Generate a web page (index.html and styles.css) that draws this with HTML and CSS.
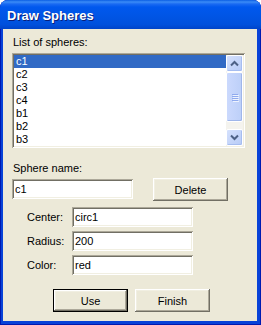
FILE: index.html
```html
<!DOCTYPE html>
<html>
<head>
<meta charset="utf-8">
<link rel="stylesheet" href="styles.css">
</head>
<body>
<div class="window">
  <div class="titlebar"><span class="title">Draw Spheres</span></div>
  <div class="client">
    <div class="label list-label">List of spheres:</div>
    <div class="listbox">
      <ul class="items">
        <li class="item selected">c1</li>
        <li class="item">c2</li>
        <li class="item">c3</li>
        <li class="item">c4</li>
        <li class="item">b1</li>
        <li class="item">b2</li>
        <li class="item">b3</li>
      </ul>
      <div class="scrollbar">
        <div class="sb-btn">
          <svg width="15" height="15" viewBox="0 0 15 15"><path d="M4 9.5 L7.5 6 L11 9.5" fill="none" stroke="#4d6185" stroke-width="2"/></svg>
        </div>
        <div class="sb-thumb">
          <div class="grip"><span></span><span></span><span></span><span></span></div>
        </div>
        <div class="sb-track"></div>
        <div class="sb-btn">
          <svg width="15" height="15" viewBox="0 0 15 15"><path d="M4 5.5 L7.5 9 L11 5.5" fill="none" stroke="#4d6185" stroke-width="2"/></svg>
        </div>
      </div>
    </div>
    <div class="label name-label">Sphere name:</div>
    <div class="name-row">
      <div class="textbox name-box">c1</div>
      <button class="btn">Delete</button>
    </div>
    <div class="fields">
      <div class="field"><span class="flabel">Center:</span><div class="textbox">circ1</div></div>
      <div class="field"><span class="flabel">Radius:</span><div class="textbox">200</div></div>
      <div class="field"><span class="flabel">Color:</span><div class="textbox">red</div></div>
    </div>
    <div class="actions">
      <button class="btn default">Use</button>
      <button class="btn">Finish</button>
    </div>
  </div>
</div>
</body>
</html>
```
FILE: styles.css
```css
* { box-sizing: border-box; }
html, body { margin: 0; padding: 0; background: #ffffff; }
body { width: 261px; height: 325px; overflow: hidden; }

.window {
  width: 261px;
  height: 325px;
  border-radius: 8px 8px 0 0;
  background: #0842d8;
  box-shadow: inset 1px 0 #0019b0, inset -1px 0 #0019b0, inset 0 -1px #0019b0;
  display: flex;
  flex-direction: column;
  overflow: hidden;
}

.titlebar {
  height: 29px;
  flex: none;
  padding: 1px 0 0 7px;
  background: linear-gradient(to bottom, #0a5ee4 0px, #3b8cf7 2px, #1a6af2 4px, #0058ee 7px, #0055e5 55%, #0050dc 85%, #0044c8 100%);
  display: flex;
  align-items: center;
}

.title {
  font-family: "Liberation Sans", Arial, sans-serif;
  font-weight: bold;
  font-size: 13px;
  color: #ffffff;
  text-shadow: 1px 1px #0a1e78;
}

.client {
  flex: 1;
  margin: 0 4px 4px 3px;
  background: #ece9d8;
  font-family: "Liberation Sans", Arial, sans-serif;
  font-size: 11px;
  color: #000000;
  display: flex;
  flex-direction: column;
}

.label {
  line-height: 13px;
  height: 13px;
  margin-left: 10px;
}
.list-label { margin-top: 7px; }

.listbox {
  margin: 4px 0 0 9px;
  width: 233px;
  height: 95px;
  padding: 2px;
  background: #ffffff;
  box-shadow: inset 1px 1px #aca899, inset -1px -1px #ffffff, inset 2px 2px #716f64, inset -2px -2px #f1efe2;
  display: flex;
}

.items {
  list-style: none;
  margin: 0;
  padding: 0;
  flex: 1;
}
.item {
  height: 13px;
  line-height: 13px;
  padding-left: 2px;
}
.item.selected {
  background: #316ac5;
  color: #ffffff;
}

.scrollbar {
  width: 17px;
  flex: none;
  display: flex;
  flex-direction: column;
  background: #f4f3ee;
}
.sb-btn {
  width: 17px;
  height: 17px;
  border: 1px solid #ffffff;
  border-radius: 2px;
  background: linear-gradient(to bottom right, #d5e1fd, #b7cbf6);
  box-shadow: inset -1px -1px #a6bdf0;
  display: flex;
  align-items: center;
  justify-content: center;
}
.sb-thumb {
  width: 17px;
  height: 50px;
  border: 1px solid #ffffff;
  border-radius: 2px;
  background: linear-gradient(to right, #cbd9fd, #bccff8);
  box-shadow: inset -1px -1px #9fb6ea, 0 0 0 0 transparent;
  display: flex;
  align-items: center;
  justify-content: center;
}
.grip {
  display: flex;
  flex-direction: column;
  gap: 1px;
}
.grip span {
  display: block;
  width: 6px;
  height: 1px;
  background: #8faaee;
  box-shadow: 1px 1px #eef3fe;
}
.sb-track { flex: 1; }

.name-label { margin-top: 14px; }

.name-row {
  margin: 3px 0 0 9px;
  display: flex;
  align-items: flex-start;
  gap: 20px;
}

.textbox {
  width: 121px;
  height: 20px;
  line-height: 20px;
  padding-left: 3px;
  background: #ffffff;
  box-shadow: inset 1px 1px #aca899, inset -1px -1px #ffffff, inset 2px 2px #716f64, inset -2px -2px #f1efe2;
}
.name-box { margin-top: 1px; }

.btn {
  width: 75px;
  height: 23px;
  padding: 0;
  border: none;
  background: #ece9d8;
  font-family: "Liberation Sans", Arial, sans-serif;
  font-size: 11px;
  color: #000000;
  box-shadow: inset -1px -1px #716f64, inset 1px 1px #ffffff, inset -2px -2px #aca899, inset 2px 2px #f1efe2;
}
.btn.default {
  border: 1px solid #000000;
}

.fields {
  margin: 6px 0 0 24px;
  display: flex;
  flex-direction: column;
  gap: 4px;
}
.field {
  display: flex;
  align-items: center;
}
.flabel {
  width: 45px;
  line-height: 13px;
}

.actions {
  margin: 14px 0 0 50px;
  display: flex;
  gap: 7px;
}
```
